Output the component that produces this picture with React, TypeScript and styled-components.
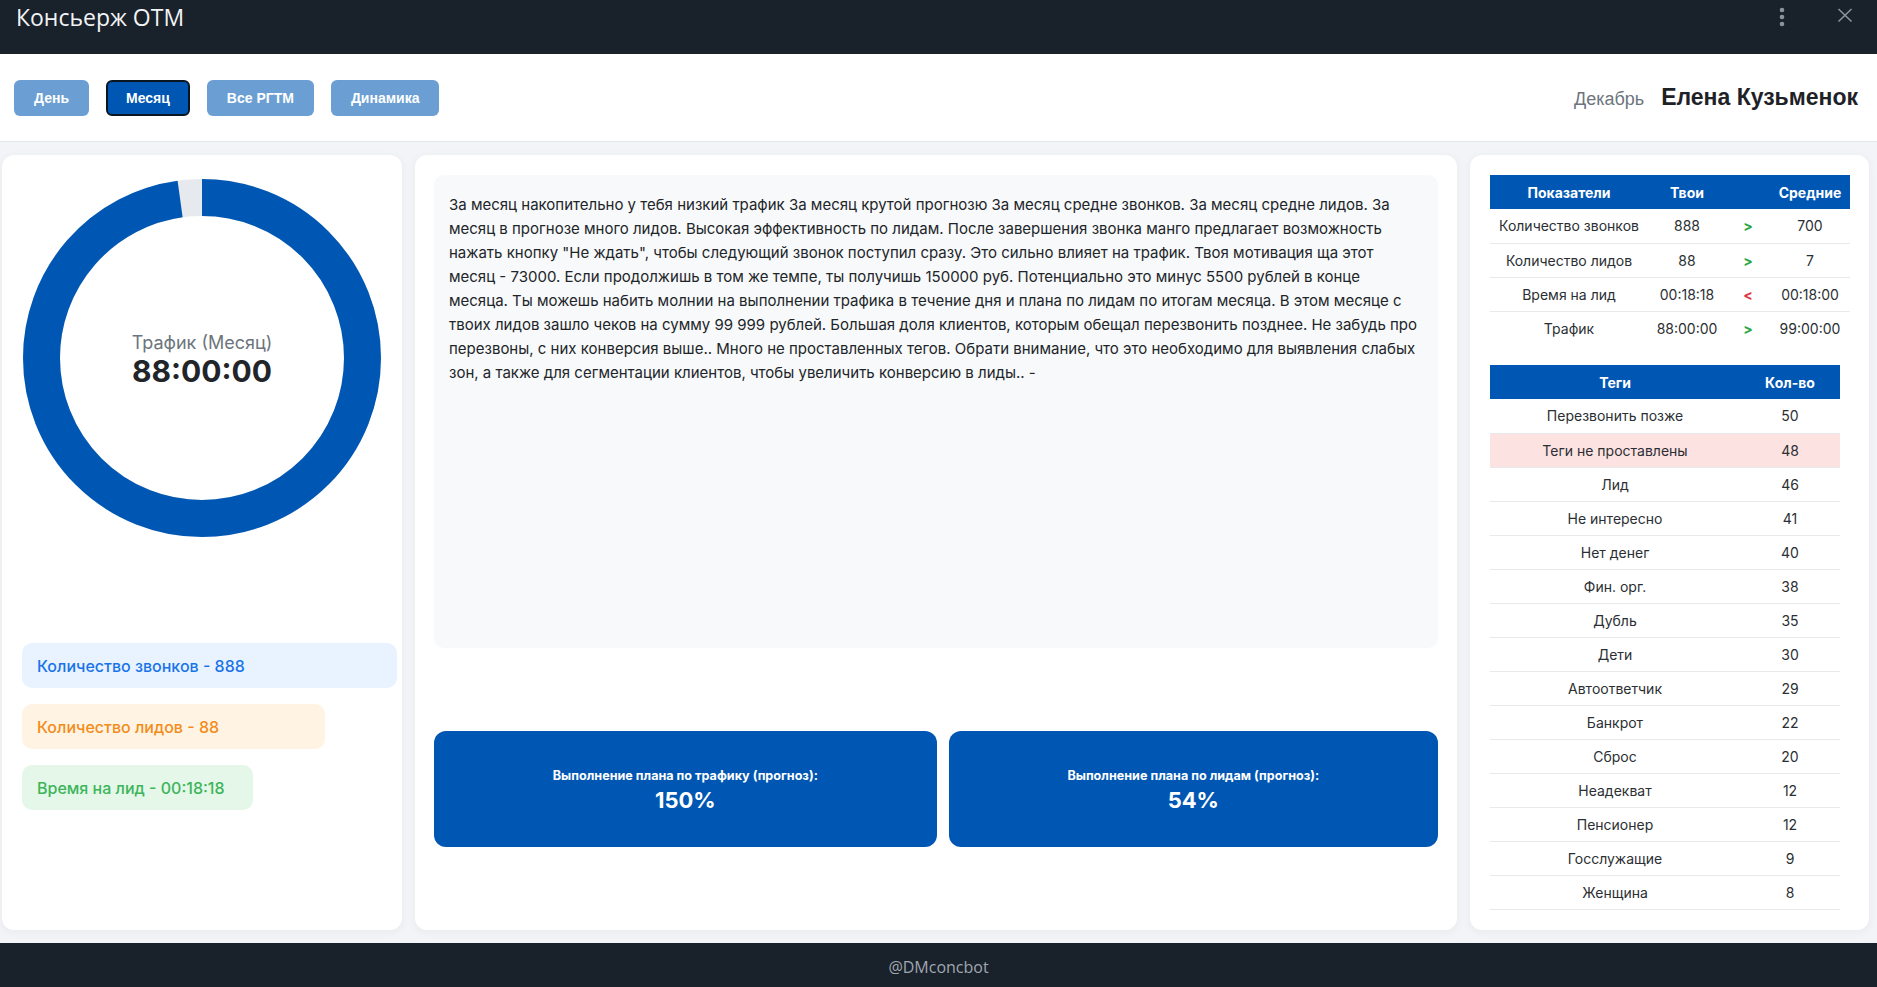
import React from "react";
import styled, { createGlobalStyle } from "styled-components";

const Global = createGlobalStyle`
  html, body { margin: 0; padding: 0; }
  body { font-family: Inter, "Noto Sans", sans-serif; background: #f3f4f7; color: #212529; }
  * { box-sizing: border-box; }
`;

const Page = styled.div`
  min-height: 100vh;
  display: flex;
  flex-direction: column;
`;

const TopBar = styled.header`
  height: 54px;
  background: #19212b;
  display: flex;
  align-items: flex-start;
  justify-content: space-between;
  padding: 2px 24px 0 16px;
`;

const AppTitle = styled.div`
  font-family: "Open Sans", sans-serif;
  font-size: 23px;
  color: #f1f3f5;
  line-height: 30px;
`;

const TopIcons = styled.div`
  display: flex;
  align-items: flex-start;
  gap: 52px;
  padding-top: 5px;
`;

const Toolbar = styled.div`
  height: 88px;
  background: #fff;
  border-bottom: 1px solid #e3e6ea;
  display: flex;
  align-items: center;
  justify-content: space-between;
  padding: 0 19px 0 14px;
`;

const Tabs = styled.div`
  display: flex;
  gap: 17px;
`;

const TabButton = styled.button<{ $active?: boolean }>`
  height: 36px;
  padding: 0 ${(p) => (p.$active ? 18 : 20)}px;
  border-radius: 6px;
  border: ${(p) => (p.$active ? "2px solid #0a1622" : "none")};
  background: ${(p) => (p.$active ? "#0057b3" : "#6b9fd4")};
  color: #fff;
  font-family: "Liberation Sans", Arial, sans-serif;
  font-weight: 700;
  font-size: 14px;
`;

const UserInfo = styled.div`
  display: flex;
  align-items: baseline;
  gap: 17px;
  font-family: "Liberation Sans", Arial, sans-serif;
`;

const Month = styled.span`
  color: #6c757d;
  font-size: 18px;
`;

const UserName = styled.span`
  color: #1e2227;
  font-size: 23px;
  font-weight: 700;
`;

const Main = styled.main`
  flex: 1;
  display: grid;
  grid-template-columns: 400px 1fr 399px;
  gap: 13px;
  padding: 13px 8px 13px 2px;
`;

const Panel = styled.section<{ $pad?: string }>`
  background: #fff;
  border-radius: 12px;
  box-shadow: 0 2px 10px rgba(20, 30, 50, 0.05);
  padding: ${(p) => p.$pad || "20px"};
  display: flex;
  flex-direction: column;
`;

const DonutWrap = styled.div`
  position: relative;
  width: 358px;
  height: 358px;
  align-self: center;
`;

const DonutCenter = styled.div`
  position: absolute;
  inset: 0;
  display: flex;
  flex-direction: column;
  align-items: center;
  justify-content: center;
  padding-top: 3px;
`;

const DonutLabel = styled.div`
  font-size: 18px;
  color: #6c757d;
  line-height: 22px;
`;

const DonutValue = styled.div`
  font-size: 30px;
  font-weight: 700;
  color: #212529;
  line-height: 34px;
`;

const Pills = styled.div`
  margin-top: 106px;
  display: flex;
  flex-direction: column;
  gap: 16px;
`;

const Pill = styled.div<{ $bg: string; $fg: string; $w: number }>`
  width: ${(p) => p.$w}px;
  height: 45px;
  display: flex;
  align-items: center;
  padding: 0 15px;
  border-radius: 10px;
  background: ${(p) => p.$bg};
  color: ${(p) => p.$fg};
  font-size: 16px;
  font-weight: 500;
`;

const Summary = styled.div`
  height: 473px;
  background: #f8f9fa;
  border-radius: 10px;
  padding: 18px 15px 16px;
  font-size: 15px;
  line-height: 24px;
  color: #212529;
`;

const KpiRow = styled.div`
  margin-top: 83px;
  display: flex;
  gap: 12px;
`;

const KpiCard = styled.div`
  flex: 1 1 auto;
  height: 116px;
  background: #0057b3;
  border-radius: 12px;
  color: #fff;
  display: flex;
  flex-direction: column;
  align-items: center;
  justify-content: center;
  gap: 2px;
  padding: 4px 20px 0;
`;

const KpiLabel = styled.div`
  font-size: 12.6px;
  font-weight: 700;
  line-height: 16px;
`;

const KpiValue = styled.div`
  font-size: 22px;
  font-weight: 700;
  line-height: 28px;
`;

const Table = styled.table<{ $w: number; $mt?: number }>`
  width: ${(p) => p.$w}px;
  border-collapse: collapse;
  table-layout: fixed;
  margin-top: ${(p) => p.$mt || 0}px;
`;

const Th = styled.th`
  height: 34px;
  background: #0057b3;
  color: #fff;
  font-size: 14px;
  font-weight: 700;
  text-align: center;
  padding: 0;
`;

const Tr = styled.tr<{ $hl?: boolean; $noBorder?: boolean }>`
  background: ${(p) => (p.$hl ? "#fde2e2" : "transparent")};
  border-bottom: ${(p) => (p.$noBorder ? "none" : "1px solid #e7e9ec")};
`;

const Td = styled.td`
  height: 34px;
  padding: 0;
  text-align: center;
  font-size: 14px;
  color: #2b2f33;
`;

const Cmp = styled.span<{ $up: boolean }>`
  color: ${(p) => (p.$up ? "#28a745" : "#dc3545")};
  font-weight: 700;
  font-size: 14px;
`;

const Footer = styled.footer`
  height: 45px;
  background: #19212b;
  display: flex;
  align-items: center;
  justify-content: center;
  padding-top: 4px;
  font-family: "Open Sans", sans-serif;
  font-size: 16px;
  color: #a0a7b0;
`;

const Donut = () => {
  const r = 160.5;
  const c = 2 * Math.PI * r;
  const frac = 88 / 90;
  return (
    <svg width="358" height="358" viewBox="0 0 358 358">
      <circle cx="179" cy="179" r={r} fill="none" stroke="#e6eaee" strokeWidth="37" />
      <circle
        cx="179"
        cy="179"
        r={r}
        fill="none"
        stroke="#0057b3"
        strokeWidth="37"
        strokeDasharray={`${c * frac} ${c}`}
        transform="rotate(-90 179 179)"
      />
    </svg>
  );
};

const metrics = [
  { name: "Количество звонков", mine: "888", up: true, avg: "700" },
  { name: "Количество лидов", mine: "88", up: true, avg: "7" },
  { name: "Время на лид", mine: "00:18:18", up: false, avg: "00:18:00" },
  { name: "Трафик", mine: "88:00:00", up: true, avg: "99:00:00" },
];

const tags: [string, number][] = [
  ["Перезвонить позже", 50],
  ["Теги не проставлены", 48],
  ["Лид", 46],
  ["Не интересно", 41],
  ["Нет денег", 40],
  ["Фин. орг.", 38],
  ["Дубль", 35],
  ["Дети", 30],
  ["Автоответчик", 29],
  ["Банкрот", 22],
  ["Сброс", 20],
  ["Неадекват", 12],
  ["Пенсионер", 12],
  ["Госслужащие", 9],
  ["Женщина", 8],
];

const summary =
  'За месяц накопительно у тебя низкий трафик За месяц крутой прогнозю За месяц средне звонков. За месяц средне лидов. За месяц в прогнозе много лидов. Высокая эффективность по лидам. После завершения звонка манго предлагает возможность нажать кнопку "Не ждать", чтобы следующий звонок поступил сразу. Это сильно влияет на трафик. Твоя мотивация ща этот месяц - 73000. Если продолжишь в том же темпе, ты получишь 150000 руб. Потенциально это минус 5500 рублей в конце месяца. Ты можешь набить молнии на выполнении трафика в течение дня и плана по лидам по итогам месяца. В этом месяце с твоих лидов зашло чеков на сумму 99 999 рублей. Большая доля клиентов, которым обещал перезвонить позднее. Не забудь про перезвоны, с них конверсия выше.. Много не проставленных тегов. Обрати внимание, что это необходимо для выявления слабых зон, а также для сегментации клиентов, чтобы увеличить конверсию в лиды.. -';

export default function App() {
  return (
    <Page>
      <Global />
      <TopBar>
        <AppTitle>Консьерж ОТМ</AppTitle>
        <TopIcons>
          <svg width="6" height="20" viewBox="0 0 6 20">
            <circle cx="3" cy="3" r="2.3" fill="#8b939c" />
            <circle cx="3" cy="10" r="2.3" fill="#8b939c" />
            <circle cx="3" cy="17" r="2.3" fill="#8b939c" />
          </svg>
          <svg width="16" height="16" viewBox="0 0 16 16">
            <path d="M1.5 2 L14.5 14.5 M14.5 2 L1.5 14.5" stroke="#8b939c" strokeWidth="1.6" />
          </svg>
        </TopIcons>
      </TopBar>
      <Toolbar>
        <Tabs>
          <TabButton>День</TabButton>
          <TabButton $active>Месяц</TabButton>
          <TabButton>Все РГТМ</TabButton>
          <TabButton>Динамика</TabButton>
        </Tabs>
        <UserInfo>
          <Month>Декабрь</Month>
          <UserName>Елена Кузьменок</UserName>
        </UserInfo>
      </Toolbar>
      <Main>
        <Panel $pad="24px 20px 20px 20px">
          <DonutWrap>
            <Donut />
            <DonutCenter>
              <DonutLabel>Трафик (Месяц)</DonutLabel>
              <DonutValue>88:00:00</DonutValue>
            </DonutCenter>
          </DonutWrap>
          <Pills>
            <Pill $bg="#e8f3ff" $fg="#1a73e8" $w={375}>Количество звонков - 888</Pill>
            <Pill $bg="#fff4e3" $fg="#f28c1a" $w={303}>Количество лидов - 88</Pill>
            <Pill $bg="#e5f7e9" $fg="#3cb55a" $w={231}>Время на лид - 00:18:18</Pill>
          </Pills>
        </Panel>
        <Panel $pad="20px 19px">
          <Summary>{summary}</Summary>
          <KpiRow>
            <KpiCard>
              <KpiLabel>Выполнение плана по трафику (прогноз):</KpiLabel>
              <KpiValue>150%</KpiValue>
            </KpiCard>
            <KpiCard>
              <KpiLabel>Выполнение плана по лидам (прогноз):</KpiLabel>
              <KpiValue>54%</KpiValue>
            </KpiCard>
          </KpiRow>
        </Panel>
        <Panel $pad="20px">
          <Table $w={360}>
            <colgroup>
              <col style={{ width: 158 }} />
              <col style={{ width: 78 }} />
              <col style={{ width: 44 }} />
              <col style={{ width: 80 }} />
            </colgroup>
            <thead>
              <tr>
                <Th>Показатели</Th>
                <Th>Твои</Th>
                <Th></Th>
                <Th>Средние</Th>
              </tr>
            </thead>
            <tbody>
              {metrics.map((m, i) => (
                <Tr key={m.name} $noBorder={i === metrics.length - 1}>
                  <Td>{m.name}</Td>
                  <Td>{m.mine}</Td>
                  <Td>
                    <Cmp $up={m.up}>{m.up ? ">" : "<"}</Cmp>
                  </Td>
                  <Td>{m.avg}</Td>
                </Tr>
              ))}
            </tbody>
          </Table>
          <Table $w={350} $mt={20}>
            <colgroup>
              <col style={{ width: 250 }} />
              <col style={{ width: 100 }} />
            </colgroup>
            <thead>
              <tr>
                <Th>Теги</Th>
                <Th>Кол-во</Th>
              </tr>
            </thead>
            <tbody>
              {tags.map(([t, n]) => (
                <Tr key={t} $hl={t === "Теги не проставлены"}>
                  <Td>{t}</Td>
                  <Td>{n}</Td>
                </Tr>
              ))}
            </tbody>
          </Table>
        </Panel>
      </Main>
      <Footer>@DMconcbot</Footer>
    </Page>
  );
}
